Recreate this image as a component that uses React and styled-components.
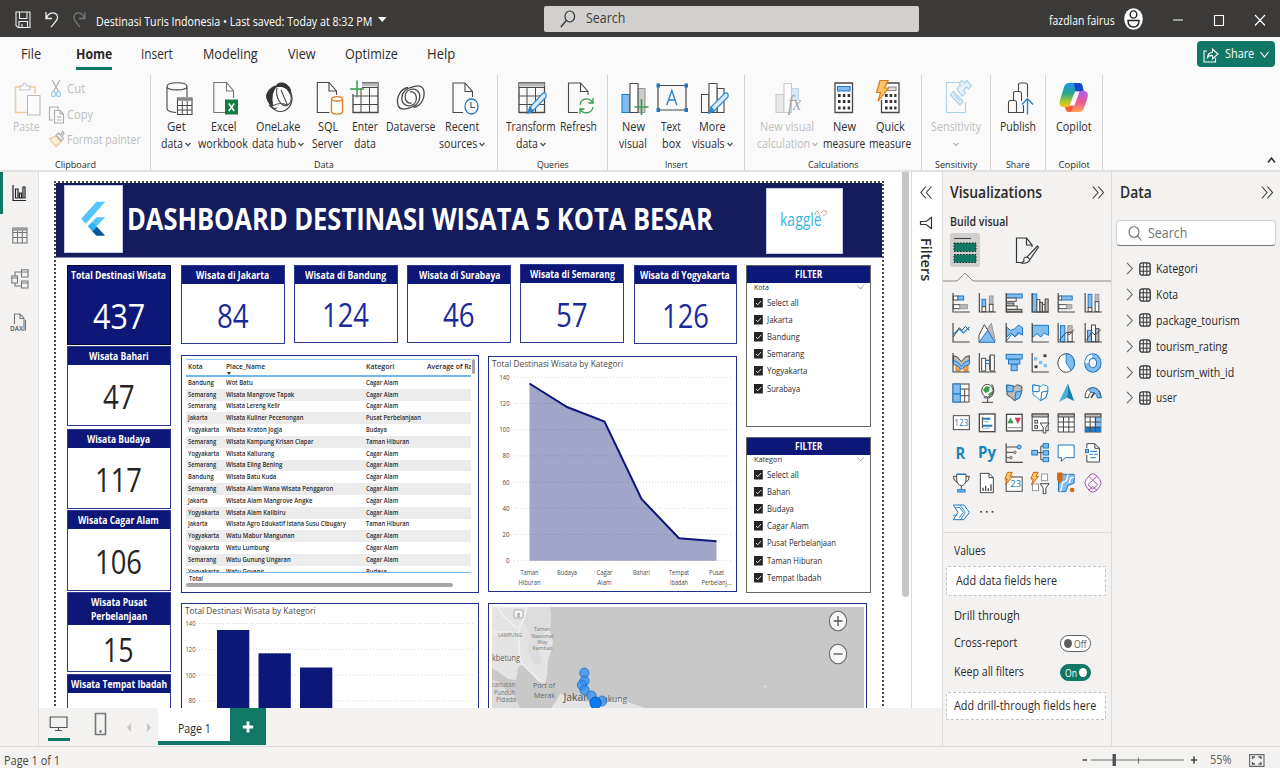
import React, { useLayoutEffect, useRef, useState } from "react";
import styled, { createGlobalStyle, css } from "styled-components";

const TEAL = "#117865";
const NAVY = "#0d1777";
const K = "#4a4846";
const B = "#1f78c4";
const LB = "#83bdf0";
const G = "#bdbbb9";
const O = "#e0812a";
const GR = "#3a9c50";

const Global = createGlobalStyle`
  * { box-sizing: border-box; }
  body { margin: 0; overflow: hidden; background: #f3f2f1; }
  svg { display: block; flex: none; overflow: visible; }
`;

/* ---------- text fitted to a condensed width ---------- */
const FitBox = styled.span`
  display: inline-block;
  flex: none;
  width: ${(p) => p.$w}px;
  white-space: nowrap;
  font-size: ${(p) => p.$size}px;
  font-weight: ${(p) => p.$weight};
  ${(p) => p.$color && css`color: ${p.$color};`}
`;
const FitInner = styled.span`
  display: inline-block;
  transform-origin: 0 50%;
`;
function Fit({ w, size = 12, weight = 400, color, children }) {
  const ref = useRef(null);
  const [k, setK] = useState(1);
  useLayoutEffect(() => {
    const natural = ref.current.offsetWidth;
    if (natural) setK(w / natural);
  }, [w, children]);
  return (
    <FitBox $w={w} $size={size} $weight={weight} $color={color}>
      <FitInner ref={ref} style={{ transform: `scaleX(${k})` }}>{children}</FitInner>
    </FitBox>
  );
}

const P = ({ d, s = K, f = "none", w = 1.1, ...r }) => (
  <path d={d} stroke={s} fill={f} strokeWidth={w} {...r} />
);

/* ---------- frame ---------- */
const Frame = styled.div`
  width: 1280px;
  height: 768px;
  display: flex;
  flex-direction: column;
  overflow: hidden;
  background: #f3f2f1;
  color: #2b2a29;
  font-family: "Open Sans", "Noto Sans", "Liberation Sans", sans-serif;
  line-height: 1.2;
`;

/* ---------- title bar ---------- */
const TitleBar = styled.header`
  height: 37px;
  flex: none;
  display: flex;
  align-items: center;
  background: #3b3a38;
  color: #fff;
  padding: 0 15px 0 15px;
`;
const TitleLeft = styled.div`
  width: 529px;
  display: flex;
  align-items: center;
  height: 100%;
`;
const TitleText = styled.div`
  display: flex;
  align-items: center;
  gap: 6px;
  margin-left: 9px;
  padding-top: 7px;
`;
const TitleSearch = styled.div`
  width: 375px;
  height: 26px;
  border-radius: 2px;
  background: #d2d0ce;
  display: flex;
  align-items: center;
  gap: 10px;
  padding-left: 16px;
  color: #3d3c3b;
`;
const TitleRight = styled.div`
  display: flex;
  align-items: center;
  margin-left: 130px;
  height: 100%;
`;
const UserName = styled.div`
  padding-top: 2px;
`;

/* ---------- ribbon ---------- */
const Ribbon = styled.section`
  height: 135px;
  flex: none;
  background: #fafafa;
  border-bottom: 2px solid #e3e2e1;
  display: flex;
  flex-direction: column;
`;
const TabsRow = styled.nav`
  height: 36px;
  display: flex;
  align-items: flex-start;
  padding-left: 21px;
`;
const Tab = styled.div`
  height: 33px;
  margin-right: ${(p) => p.$gap}px;
  line-height: 32px;
  border-bottom: 3px solid ${(p) => (p.$on ? TEAL : "transparent")};
`;
const ShareButton = styled.div`
  margin: 4px 5px 0 auto;
  width: 78px;
  height: 26px;
  border-radius: 4px;
  background: ${TEAL};
  color: #fff;
  display: flex;
  align-items: center;
  padding: 1px 0 0 6px;
  gap: 6px;
`;
const Groups = styled.div`
  height: 97px;
  display: flex;
  padding-top: 2px;
  align-items: flex-start;
`;
const Group = styled.div`
  width: ${(p) => p.$w}px;
  height: 95px;
  border-right: 1px solid #d5d3d1;
  display: flex;
  flex-direction: column;
`;
const GroupTools = styled.div`
  height: 81px;
  display: flex;
  justify-content: ${(p) => (p.$start === undefined ? "center" : "flex-start")};
  padding-left: ${(p) => p.$start || 0}px;
`;
const GroupName = styled.div`
  height: 13px;
  line-height: 13px;
  text-align: center;
`;
const Tool = styled.div`
  width: ${(p) => p.$w}px;
  flex: none;
  display: flex;
  flex-direction: column;
  align-items: center;
  color: ${(p) => (p.$off ? "#c0bebc" : "#2f2e2d")};
  padding-top: 3px;
`;
const ToolLine = styled.div`
  height: 17.4px;
  line-height: 17.4px;
  display: flex;
  align-items: center;
  justify-content: center;
  gap: 2px;
  white-space: nowrap;
`;
const ToolIcon = styled.div`
  height: 40px;
`;
const ClipList = styled.div`
  display: flex;
  flex-direction: column;
  color: #c0bebc;
  margin-left: 5px;
  padding-top: 1px;
`;
const ClipRow = styled.div`
  height: 25.8px;
  display: flex;
  align-items: center;
  gap: 2px;
`;
const Collapse = styled.div`
  margin: 81px 4px 0 auto;
`;

const Chev = ({ c = "#444", s = 6 }) => (
  <svg width={s} height={s} viewBox="0 0 6 6"><P d="M.6 2L3 4.600L5.400 2" s={c} w={1.2} /></svg>
);

const swirl = "M408 87.500C400 89 396 98 398 105C399.500 110 404 109.500 408 108.300C414 107 419.500 104 419.800 97C420 91 415 88 410.500 89.500C406 91 404.500 95 405.500 99C406.500 102 409 103.500 411.500 103";

const toolIcons = {
  paste: () => (
    <g opacity=".55">
      <P d="M21 87H16.5V112.500H28M31 87H36V94" s="#e8a658" w={1.5} />
      <P d="M21 90V86H23.500Q25.500 80 28 86H31V90Z" s="#999" f="#fff" />
      <P d="M28.500 95.500H41V115H28.500Z" s="#888" f="#fff" />
    </g>
  ),
  get: () => (
    <g>
      <P d="M176 112.500C171 112 167 110.500 167 108.500V86.500C167 81.500 187 81.500 187 86.500V97M167 86.500C167 91 187 91 187 86.500" f="none" />
      <P d="M177.500 98H192V114.500H177.500Z" f="#fff" />
      <P d="M177.500 99.500H192" w={2.6} s="#8a8886" />
      <P d="M177.500 105.500H192M177.500 110H192M182.300 101V114M187.200 101V114" w={1} />
    </g>
  ),
  excel: () => (
    <g>
      <P d="M225 112.500H213.800V82.500H226.500L233.500 91V98M226.500 82.500V91H233.500" s="#777" />
      <rect x="225" y="99.500" width="13" height="15" fill="#107c41" />
      <P d="M228.800 103.500L234.200 111M234.200 103.500L228.800 111" s="#fff" w={1.6} />
    </g>
  ),
  onelake: () => (
    <g>
      <ellipse cx="280.500" cy="98.500" rx="11.500" ry="13" fill="#fff" stroke="#444" strokeWidth="1.200" />
      <P d="M276 86C278 82 285 81.500 289 87C291 90 291 92 290 94C288 88 282 85 276 87Z" f="#333" s="#333" w={1} />
      <P d="M275 86C268 89 265 95 267.500 100C269 104 271 105.500 273 106C271 99 272 92 276 87Z" f="#333" s="#333" w={1} />
      <P d="M277 88C275 97 281 107 287 105.500C291 103.500 292 99 290.500 94M272.500 106C278 102.500 284 103 287.500 105.500M281 90L287.500 105M269 105C271 108 274 109 277 108" />
    </g>
  ),
  sql: () => (
    <g>
      <P d="M329 112.500H316.800V82.500H328.500L336 91V95M328.500 82.500V91H336" />
      <P d="M331 99.500V111.500C331 115 342 115 342 111.500V99.500" s={O} f="#fff" w={1.4} />
      <ellipse cx="336.500" cy="98.800" rx="5.500" ry="2.200" fill="#fff" stroke={O} strokeWidth="1.400" />
    </g>
  ),
  enter: () => (
    <g>
      <P d="M353 94V112.500H378V83H362" w={1.3} />
      <P d="M362 84.800H378" s="#bbb" w={3} />
      <P d="M353 96H378M353 104.500H378M361 88V112M369.500 88V112M362 87.500H378" w={1} />
      <P d="M350 89H364M357 80.500V97.500" s={GR} w={1.5} />
    </g>
  ),
  dataverse: () => (
    <g>
      <P d={swirl} w={1.3} />
      <P d={swirl} w={1.3} transform="rotate(180 410.800 97.500)" />
    </g>
  ),
  recent: () => (
    <g>
      <P d="M463 112.500H453V83H465L472.500 91.500V97M465 83V91.500H472.500" />
      <ellipse cx="471.500" cy="106.500" rx="6.500" ry="7.500" fill="#fff" stroke={B} strokeWidth="1.300" />
      <P d="M471 102V107.500H475" s="#555" />
    </g>
  ),
  transform: () => (
    <g>
      <P d="M519 83H544.500V112.500H519Z" w={1.3} />
      <P d="M519 85H544.500" s="#bbb" w={3} />
      <P d="M519 96H544.500M519 104.500H544.500M527 88V112M535.500 88V112M519 87.500H544" w={1} />
      <P d="M528 113L530 107L543 93Q547 92 546 97L533 111Z" s="#2c86cc" f="#d6eafb" w={1.2} />
      <P d="M528 113L530 107L533 111Z" s="#2c86cc" f="#2c86cc" />
    </g>
  ),
  refresh: () => (
    <g>
      <P d="M578 112.500H568.500V83H580.500L588 91.500V95M580.500 83V91.500H588" />
      <P d="M580 105C580.500 98.500 589 96.500 592.500 102.500M593 107C592 113.500 583.500 115 580.500 109.500M593 98V103H588.500M580 114V109H584.500" s={GR} w={1.3} />
    </g>
  ),
  newvisual: () => (
    <g>
      <P d="M622 94.500H630V112.500H622Z" s={B} f={LB} />
      <P d="M638 88.500H645V112.500H638Z" s="#999" f="#ccc" />
      <P d="M630 83.500H638V112.500H630Z" f="#fff" />
      <P d="M634.500 107H648.500M641.500 99V115" s={GR} w={1.6} />
    </g>
  ),
  textbox: () => (
    <g>
      <P d="M658 85.500H686V110H658Z" w={1.2} />
      <P d="M656.500 83.500h3.500v4h-3.500ZM684.500 83.500h3.500v4h-3.500ZM656.500 108h3.500v4h-3.500ZM684.500 108h3.500v4h-3.500Z" f={B} s={B} w={0} />
      <P d="M666.800 105L671.800 90.500L676.800 105M668.600 100H675" s="#2b86cf" w={1.4} />
    </g>
  ),
  more: () => (
    <g>
      <P d="M701.500 94.500H709V112.500H701.500Z" />
      <P d="M717 88.500H724V112.500H717Z" />
      <P d="M709 83.500H717V112.500H709Z" f="#fff" />
      <P d="M709 113L711 107L725 93Q729 92 728 97L714 111Z" s="#2c86cc" f="#d6eafb" w={1.2} />
      <P d="M709 113L711 107L714 111Z" s="#2c86cc" f="#2c86cc" />
    </g>
  ),
  newcalc: () => (
    <g opacity=".75">
      <P d="M776 94.500H784V112.500H776Z" s="#bbb" f="#e4e4e4" />
      <P d="M791.500 88.500H798.500V100H791.500Z" s="#a9cde8" f="#cfe4f5" />
      <P d="M784 83.500H791.500V112.500H784Z" s="#bbb" f="#fff" />
      <text x="788" y="110" fontFamily="Liberation Serif, serif" fontStyle="italic" fontSize="21" fill="#8a8a8a" textLength="13" lengthAdjust="spacingAndGlyphs">fx</text>
    </g>
  ),
  newmeasure: () => (
    <g>
      <P d="M835 83H852.500V112.500H835Z" w={1.3} f="#fff" />
      <P d="M837.500 86.500H850V91H837.500Z" s={B} f={LB} />
      <P d="M838 95.500H850.500M838 101.500H850.500M838 108H850.500" w={3} strokeDasharray="2.600 2.200" s="#333" />
    </g>
  ),
  quick: () => (
    <g>
      <P d="M883 83H899V112.500H881.500V100" w={1.3} f="#fff" />
      <P d="M888 87H896V90.500H887" s="#888" f="#ddd" />
      <P d="M885 95.500H896.500M885 101.500H896.500M885 108H896.500" w={3} strokeDasharray="2.600 2.000" s="#333" />
      <P d="M880 80.500H888L884.500 88H888.500L878 101.500L880.500 92.500H876.500Z" s="#d97a1c" f="#fbc46a" w={1.2} />
    </g>
  ),
  sensitivity: () => (
    <g opacity=".6">
      <P d="M961 82.500H946.500V112.500H965.500V102" s="#7db9e2" />
      <P d="M950.500 95L953.500 91.500L963 101.500L960 105ZM954 95L960 101" s="#7db9e2" f="#d8ebf8" w={1.2} />
      <P d="M957 89L960.500 85L959 83L962 80.500L964.500 83L967 80.500L971.500 86L968.500 89L966.500 87L963.500 90.500L965.500 93L962 96Z" s="#7db9e2" f="#d8ebf8" w={1.2} />
    </g>
  ),
  publish: () => (
    <g>
      <P d="M1018.500 91V85Q1018.500 83 1020.500 83H1025Q1027.500 83 1027.500 85V97" />
      <P d="M1013.500 100V93.500Q1013.500 91.500 1015.500 91.500H1019Q1021.500 91.500 1021.500 93.500V101" />
      <P d="M1008.500 112.500V102.500Q1008.500 100.500 1010.500 100.500H1014.500Q1016.500 100.500 1016.500 102.500V112.500ZM1016.500 112.500H1023.500V105" />
      <P d="M1027.500 114.500V98.500M1022 104.500L1027.500 98.500L1033 104.500" s="#2b86cf" w={1.4} />
    </g>
  ),
  copilot: () => (
    <g>
      <defs>
        <linearGradient id="cpA" x1="0" y1="0" x2="0" y2="1"><stop offset="0" stopColor="#1f8ff0" /><stop offset=".45" stopColor="#2aa88c" /><stop offset=".75" stopColor="#a9c52e" /><stop offset="1" stopColor="#fdc311" /></linearGradient>
        <linearGradient id="cpB" x1="0" y1="0" x2="0" y2="1"><stop offset="0" stopColor="#b05cf0" /><stop offset=".55" stopColor="#ee5a8e" /><stop offset="1" stopColor="#ffa351" /></linearGradient>
      </defs>
      <path d="M1073 83H1079C1081 83 1082 84 1082.500 86L1083.500 91H1078Q1075.500 91 1074.500 94L1071 104Q1070 107 1067 107H1063C1060 107 1059 104 1060 100L1064 87Q1065.500 83 1069 83Z" fill="url(#cpA)" />
      <path d="M1074 83H1079C1081 83 1082 84 1082.500 86L1083.500 91H1078Q1076.500 91 1075.500 92Z" fill="#1647c8" />
      <path d="M1077 91H1084C1087.500 91 1088.500 94 1087.500 98L1084 108Q1082.500 112 1079 112H1069C1067 112 1066 111 1065.500 109L1065 107H1067Q1070 107 1071 104L1074.500 94Q1075.500 91 1077 91Z" fill="url(#cpB)" />
      <path d="M1065 107H1067Q1070 107 1071 104L1073 108L1071 112H1069Q1066 112 1065 107Z" fill="#f0552c" opacity=".8" />
      <path d="M1075 91.500L1079.500 91.500L1074.500 105.500H1069.500Z" fill="#fff" opacity=".95" />
    </g>
  ),
};

const ribbonGroups = [
  { w: 347, start: 4, name: "Data", nw: 20, tools: [
    { i: "get", cx: 176, w: 42, a: ["Get", 19], b: ["data", 22], c: 1 },
    { i: "excel", cx: 223, w: 52, a: ["Excel", 25], b: ["workbook", 50] },
    { i: "onelake", cx: 278, w: 58, a: ["OneLake", 44], b: ["data hub", 44], c: 1 },
    { i: "sql", cx: 327.5, w: 41, a: ["SQL", 20], b: ["Server", 31] },
    { i: "enter", cx: 365, w: 34, a: ["Enter", 26], b: ["data", 22] },
    { i: "dataverse", cx: 410, w: 56, a: ["Dataverse", 49] },
    { i: "recent", cx: 462, w: 48, a: ["Recent", 34], b: ["sources", 38], c: 1 },
  ] },
  { w: 110, start: 8, name: "Queries", nw: 32, tools: [
    { i: "transform", cx: 531, w: 50, a: ["Transform", 50], b: ["data", 22], c: 1 },
    { i: "refresh", cx: 578, w: 44, a: ["Refresh", 37] },
  ] },
  { w: 137, start: 7, name: "Insert", nw: 23, tools: [
    { i: "newvisual", cx: 633, w: 36, a: ["New", 23], b: ["visual", 28] },
    { i: "textbox", cx: 671, w: 40, a: ["Text", 20], b: ["box", 19] },
    { i: "more", cx: 712, w: 42, a: ["More", 27], b: ["visuals", 33], c: 1 },
  ] },
  { w: 177, start: 8, name: "Calculations", nw: 51, tools: [
    { i: "newcalc", cx: 787, w: 68, a: ["New visual", 54], b: ["calculation", 53], c: 1, off: 1 },
    { i: "newmeasure", cx: 844, w: 46, a: ["New", 23], b: ["measure", 42] },
    { i: "quick", cx: 890, w: 46, a: ["Quick", 29], b: ["measure", 42] },
  ] },
  { w: 69, name: "Sensitivity", nw: 42, tools: [{ i: "sensitivity", cx: 956, w: 52, a: ["Sensitivity", 50], c: 1, off: 1 }] },
  { w: 55, name: "Share", nw: 24, tools: [{ i: "publish", cx: 1018, w: 38, a: ["Publish", 36] }] },
  { w: 57, name: "Copilot", nw: 31, tools: [{ i: "copilot", cx: 1074, w: 38, a: ["Copilot", 36] }] },
];

function RibbonTool({ i, cx, w, a, b, c, off }) {
  const Icon = toolIcons[i];
  return (
    <Tool $w={w} $off={off}>
      <ToolIcon><svg width="40" height="40" viewBox={`${cx - 20} 78 40 40`}><Icon /></svg></ToolIcon>
      <ToolLine><Fit w={a[1]} size={12}>{a[0]}</Fit></ToolLine>
      {(b || c) && (
        <ToolLine>
          {b && <Fit w={b[1]} size={12}>{b[0]}</Fit>}
          {c && <Chev c={off ? "#b5b3b1" : "#444"} />}
        </ToolLine>
      )}
    </Tool>
  );
}

/* ---------- body ---------- */
const Body = styled.main`
  height: 574px;
  flex: none;
  display: flex;
`;
const Rail = styled.aside`
  width: 39px;
  flex: none;
  border-right: 1px solid #e1dfdd;
  background: #f3f2f1;
`;
const RailItem = styled.div`
  height: ${(p) => p.$h}px;
  border-left: 3px solid ${(p) => (p.$on ? TEAL : "transparent")};
  display: flex;
  align-items: center;
  padding-left: ${(p) => p.$pl || 9}px;
`;
const Work = styled.div`
  width: 903px;
  flex: none;
  display: flex;
  flex-direction: column;
`;
const WorkTop = styled.div`
  height: 536px;
  display: flex;
  overflow: hidden;
  background: #fff;
`;
const Canvas = styled.div`
  width: 863px;
  height: 536px;
  overflow: hidden;
  padding: 9px 0 0 15px;
`;
const Scroll = styled.div`
  width: 10px;
  flex: none;
  border-right: 1px solid #dcdad8;
`;
const Thumb = styled.div`
  width: 7px;
  height: 425px;
  border-radius: 0 0 4px 4px;
  background: #c8c6c4;
`;
const FiltersPane = styled.div`
  width: 30px;
  display: flex;
  flex-direction: column;
  align-items: center;
  padding: 14px 2px 0 0;
  gap: 17px;
`;
const VerticalLabel = styled.div`
  writing-mode: vertical-rl;
  font-size: 14.5px;
  font-weight: 600;
  line-height: 16px;
  margin-top: -9px;
  margin-right: 1px;
`;

/* ---------- report page ---------- */
const Page = styled.div`
  width: 830px;
  height: 620px;
  border: 2px dotted #4a4a4a;
`;
const Banner = styled.div`
  height: 75px;
  display: flex;
  background: #141c5e;
  border-bottom: 1px solid #8a8fb0;
  color: #fff;
`;
const Logo = styled.div`
  width: ${(p) => p.$w}px;
  height: ${(p) => p.$h}px;
  margin: ${(p) => p.$m};
  flex: none;
  background: #fff;
  border: 1px solid #c9cce6;
  display: flex;
  align-items: center;
  justify-content: center;
`;
const BannerTitle = styled.h1`
  margin: 0 0 0 4px;
  height: 72px;
  line-height: 72px;
  font-size: 30px;
`;
const KaggleMark = styled.div`
  display: flex;
  align-items: center;
  position: relative;
  line-height: 20px;
  margin: -4px 8px 0 0;
`;
const Spark = styled.div`
  position: absolute;
  left: 34px;
  top: 0;
`;
const Report = styled.div`
  display: flex;
  padding: 7px 0 0 11px;
`;
const LeftCol = styled.div`
  width: 104px;
  flex: none;
`;
const MainCol = styled.div`
  margin-left: 10px;
`;
const Upper = styled.div`
  display: flex;
  height: 338px;
`;
const Middle = styled.div`
  width: 556px;
`;
const CardsRow = styled.div`
  display: flex;
  justify-content: space-between;
  height: 80px;
`;
const PanelsRow = styled.div`
  display: flex;
  gap: 9px;
  margin-top: 10px;
`;
const LowerRow = styled.div`
  display: flex;
  gap: 9px;
`;
const FilterCol = styled.div`
  margin-left: 9px;
  display: flex;
  flex-direction: column;
  gap: 10px;
`;
const CardBox = styled.div`
  width: 103.5px;
  height: ${(p) => p.$h || 80}px;
  margin-top: ${(p) => p.$mt || 0}px;
  border: 1px solid ${(p) => (p.$solid ? "#05082e" : "#2c3892")};
  background: ${(p) => (p.$solid ? NAVY : "#fff")};
  color: ${(p) => p.$c};
  display: flex;
  flex-direction: column;
`;
const CardHead = styled.div`
  background: ${NAVY};
  color: #fff;
  height: ${(p) => p.$h}px;
  display: flex;
  flex-direction: column;
  align-items: center;
  justify-content: center;
  line-height: 14px;
  flex: none;
`;
const CardValue = styled.div`
  flex: 1;
  display: flex;
  align-items: center;
  justify-content: center;
  line-height: 36px;
  padding-top: 4px;
`;
function Card({ title, value, vw, size = 32, c = "#252423", solid, h, mt }) {
  return (
    <CardBox $solid={solid} $h={h} $mt={mt} $c={c}>
      <CardHead $h={title.length > 1 ? 32 : 18}>
        {title.map(([t, w]) => <Fit key={t} w={w} size={10} weight={700}>{t}</Fit>)}
      </CardHead>
      {value && <CardValue><Fit w={vw} size={size}>{value}</Fit></CardValue>}
    </CardBox>
  );
}

const Panel = styled.div`
  width: ${(p) => p.$w}px;
  height: ${(p) => p.$h}px;
  margin-top: ${(p) => p.$mt || 0}px;
  border: 1px solid #232f8c;
  background: #fff;
  padding: ${(p) => p.$pad || "0"};
  overflow: hidden;
  flex: none;
`;
const TableFrame = styled.div`
  display: flex;
  height: 224px;
  gap: 1px;
`;
const TableArea = styled.div`
  width: 285px;
  overflow: hidden;
`;
const TableGrid = styled.div`
  display: grid;
  grid-template-columns: 37.5px 140.500px 61px 60px;
  height: ${(p) => p.$h}px;
  align-items: center;
  padding-left: 2px;
  width: 299px;
  line-height: 10px;
  background: ${(p) => (p.$alt ? "#ececec" : "transparent")};
`;
const TableHead = styled.div`
  height: 18px;
  border-top: 1px solid #8ec7f5;
  border-bottom: 2px solid #74b6ee;
`;
const TableRows = styled.div`
  height: 195px;
  overflow: hidden;
`;
const TableTotal = styled.div`
  height: 13px;
  border-top: 1px solid #74b6ee;
  border-bottom: 1px solid #8ec7f5;
  padding-left: 3px;
  display: flex;
  align-items: center;
`;
const HBar = styled.div`
  width: 267px;
  height: 4px;
  border-radius: 2px;
  background: #a6a6a6;
`;
const VBar = styled.div`
  width: 3px;
  height: 15px;
  border-radius: 2px;
  background: #a6a6a6;
`;
const HeadCell = styled.div`
  position: relative;
  display: flex;
`;
const SortMark = styled.div`
  position: absolute;
  left: 1px;
  top: 10px;
  border: 2px solid transparent;
  border-top: 3px solid #333;
`;

const CA = ["Cagar Alam", 32.5], TH = ["Taman Hiburan", 43], PP = ["Pusat Perbelanjaan", 55], BU = ["Budaya", 21];
const BD = ["Bandung", 25.5], SM = ["Semarang", 28.5], JK = ["Jakarta", 20], YK = ["Yogyakarta", 31];
const rows = [
  [BD, ["Wot Batu", 26.5], CA],
  [SM, ["Wisata Mangrove Tapak", 68.5], CA],
  [SM, ["Wisata Lereng Kelir", 54.5], CA],
  [JK, ["Wisata Kuliner Pecenongan", 77.5], PP],
  [YK, ["Wisata Kraton Jogja", 56], BU],
  [SM, ["Wisata Kampung Krisan Clapar", 87], TH],
  [YK, ["Wisata Kaliurang", 48], CA],
  [SM, ["Wisata Eling Bening", 56], CA],
  [BD, ["Wisata Batu Kuda", 50.5], CA],
  [SM, ["Wisata Alam Wana Wisata Penggaron", 107], CA],
  [JK, ["Wisata Alam Mangrove Angke", 86], CA],
  [YK, ["Wisata Alam Kalibiru", 59.5], CA],
  [JK, ["Wisata Agro Edukatif Istana Susu Cibugary", 119.5], TH],
  [YK, ["Watu Mabur Mangunan", 68.5], CA],
  [YK, ["Watu Lumbung", 43.5], CA],
  [SM, ["Watu Gunung Ungaran", 65], CA],
  [YK, ["Watu Goyang", 38], BU],
];

function DataTable() {
  return (
    <Panel $w={298} $h={238} $pad="3px 0 0 4px">
      <TableFrame>
        <TableArea>
          <TableHead>
            <TableGrid $h={14}>
              <Fit w={15} size={7} weight={600}>Kota</Fit>
              <HeadCell><Fit w={39} size={7} weight={600}>Place_Name</Fit><SortMark /></HeadCell>
              <Fit w={28} size={7} weight={600}>Kategori</Fit>
              <Fit w={58} size={7} weight={600}>Average of Rating</Fit>
            </TableGrid>
          </TableHead>
          <TableRows>
            {rows.map((r, n) => (
              <TableGrid key={n} $h={11.8} $alt={n % 2 === 1}>
                {r.map(([t, w]) => <Fit key={t} w={w} size={6.3} weight={600}>{t}</Fit>)}
              </TableGrid>
            ))}
          </TableRows>
          <TableTotal><Fit w={14} size={6.500} weight={600}>Total</Fit></TableTotal>
        </TableArea>
        <VBar />
      </TableFrame>
      <HBar />
    </Panel>
  );
}

const ChartText = ({ x, y, w, size = 6.500, anchor = "middle", children, c = "#4a4846" }) => (
  <text x={x} y={y} fontSize={size} fill={c} textAnchor={anchor} textLength={w} lengthAdjust="spacingAndGlyphs">{children}</text>
);

function AreaChart() {
  const ticks = [140, 120, 100, 80, 60, 40, 20, 0];
  const pts = [[529.5, 383.5], [567, 407], [604.5, 421.5], [641.5, 499], [679, 538.3], [716.5, 541.2]];
  const line = pts.map((p) => p.join(" ")).join("L");
  const cats = [["Taman", 18, "Hiburan", 22], ["Budaya", 20], ["Cagar", 16, "Alam", 14], ["Bahari", 17], ["Tempat", 20, "Ibadah", 18], ["Pusat", 15, "Perbelanj...", 30]];
  return (
    <Panel $w={249} $h={236} $mt={1}>
      <svg width="248" height="234" viewBox="489 357 248 234">
        <ChartText x={492} y={367} w={131} size={9} anchor="start">Total Destinasi Wisata by Kategori</ChartText>
        {ticks.map((t, n) => {
          const y = 377.300 + n * 26.2;
          return (
            <g key={t}>
              <line x1="514" x2="732" y1={y} y2={y} stroke="#d6d6d6" strokeDasharray="1 2" />
              <ChartText x={509.500} y={y + 2.400} w={t > 99 ? 10 : t ? 7 : 3.500} anchor="end">{t}</ChartText>
            </g>
          );
        })}
        <path d={`M529.5 560.700L${line}L716.5 560.700Z`} fill={NAVY} opacity=".39" />
        <path d={`M${line}`} fill="none" stroke={NAVY} strokeWidth="2" />
        {cats.map((c, n) => (
          <g key={n}>
            <ChartText x={pts[n][0]} y={575} w={c[1]}>{c[0]}</ChartText>
            {c[2] && <ChartText x={pts[n][0]} y={584.500} w={c[3]}>{c[2]}</ChartText>}
          </g>
        ))}
      </svg>
    </Panel>
  );
}

function BarChart() {
  const bars = [[217, 630], [258.5, 653.3], [300, 667.5]];
  return (
    <Panel $w={298} $h={180}>
      <svg width="296" height="178" viewBox="182 604 296 178">
        <ChartText x={185} y={613.500} w={130.500} size={9} anchor="start">Total Destinasi Wisata by Kategori</ChartText>
        {[140, 120, 100, 80].map((t, n) => {
          const y = 623.500 + n * 25.8;
          return (
            <g key={t}>
              <line x1="199" x2="474" y1={y} y2={y} stroke="#d6d6d6" strokeDasharray="1 2" />
              <ChartText x={195.500} y={y + 2.400} w={t > 99 ? 10 : 7} anchor="end">{t}</ChartText>
            </g>
          );
        })}
        {bars.map(([x, y]) => <rect key={x} x={x} y={y} width="32.300" height={780 - y} fill={NAVY} />)}
      </svg>
    </Panel>
  );
}

function MapPanel() {
  const dots = [[584.3, 673], [584.5, 681], [582, 685], [584.5, 690], [591.5, 696], [602, 701]];
  return (
    <Panel $w={379} $h={180} $pad="3px">
      <svg width="372" height="172" viewBox="492 607 372 172">
        <rect x="492" y="607" width="372" height="172" fill="#c8c8c8" />
        <path d="M492 607H548L551 614L550 630L553 642L551 652L548 660L547 675L545 684L538 681L530 672L522 664L518 668L516 680L508 679L500 673L492 668Z" fill="#e4e4e4" />
        <path d="M492 607H550L551 618L540 640L538 648L542 664L534 664L527 652L530 635L524 622L528 607Z" fill="#dcdcdc" />
        <path d="M492 607H527L524 618L519 628V652L522 664L540 681M492 632H512M498 607L503 616L517 628" fill="none" stroke="#f4f4f4" strokeWidth="1.200" />
        <path d="M492 680L500 682L506 690L513 693L520 708H492Z" fill="#dcdcdc" />
        <path d="M551 708L557 700L560 693L566 697L574 699L588 702L596 706L606 703L616 699L622 698L630 703L645 708V779H540Z" fill="#e4e4e4" />
        <rect x="514" y="610" width="9" height="8" rx="1" fill="#f5f5f5" stroke="#999" strokeWidth=".8" />
        <ChartText x={518.500} y={616.500} w={3} size={5.500}>8</ChartText>
        <ChartText x={510} y={636.500} w={24} size={5.500} c="#777">LAMPUNG</ChartText>
        <ChartText x={542} y={631} w={16} size={5.500} c="#777">Taman</ChartText>
        <ChartText x={542.500} y={637.500} w={22} size={5.500} c="#777">Nasional</ChartText>
        <ChartText x={542.500} y={643.500} w={10} size={5.500} c="#777">Way</ChartText>
        <ChartText x={542.500} y={649.500} w={20} size={5.500} c="#777">Kambas</ChartText>
        <ChartText x={492} y={661} w={28} size={8.500} anchor="start" c="#666">kbetung</ChartText>
        <ChartText x={492} y={687} w={23} size={7} anchor="start" c="#777">camatan</ChartText>
        <ChartText x={504.500} y={695} w={21} size={7} c="#777">Punduh</ChartText>
        <ChartText x={506} y={702} w={20} size={7} c="#777">Pidada</ChartText>
        <ChartText x={544} y={688} w={22} size={8} c="#666">Port of</ChartText>
        <ChartText x={544.500} y={698} w={21} size={8} c="#666">Merak</ChartText>
        <ChartText x={563.500} y={701} w={24} size={10.500} anchor="start" c="#555">Jakar</ChartText>
        <ChartText x={603} y={701.500} w={24} size={9.500} anchor="start" c="#666">akung</ChartText>
        <circle cx="765" cy="686.500" r="1" fill="#ededed" />
        {dots.map(([x, y], n) => <ellipse key={n} cx={x} cy={y} rx="4.600" ry="5" fill="#2f8ff0" fillOpacity=".75" stroke="#1b6fd0" strokeWidth=".8" />)}
        <ellipse cx="595.500" cy="703" rx="5.500" ry="6" fill="#0a7bf2" stroke="#0a55c0" />
        {[621, 654].map((y, n) => (
          <g key={y}>
            <ellipse cx="838" cy={y} rx="8.600" ry="9.800" fill="#f7f7f7" stroke="#666" strokeWidth="1.100" />
            <path d={n ? `M833.5 ${y}H842.5` : `M833.5 ${y}H842.5M838 ${y - 5}V${y + 5}`} stroke="#555" strokeWidth="1.300" />
          </g>
        ))}
      </svg>
    </Panel>
  );
}

const FilterBox = styled.div`
  width: 125px;
  height: ${(p) => p.$h}px;
  border: 1px solid #666;
  background: #fff;
`;
const FilterHead = styled.div`
  height: 17px;
  background: ${NAVY};
  color: #fff;
  display: flex;
  align-items: center;
  justify-content: center;
  line-height: 14px;
  padding-bottom: 2px;
`;
const FilterField = styled.div`
  height: 11px;
  padding: 0 6px 3px 7px;
  display: flex;
  align-items: center;
  justify-content: space-between;
  line-height: 10px;
`;
const FilterItem = styled.div`
  height: 17.2px;
  padding-left: 7px;
  display: flex;
  align-items: center;
  gap: 4px;
  line-height: 14px;
`;
function FilterPanel({ h, field, fw, items }) {
  return (
    <FilterBox $h={h}>
      <FilterHead><Fit w={27} size={10} weight={700}>FILTER</Fit></FilterHead>
      <FilterField>
        <Fit w={fw} size={7.500}>{field}</Fit>
        <svg width="7" height="5" viewBox="0 0 7 5"><P d="M.5 .5L3.500 4L6.500 .5" s="#999" w={.9} /></svg>
      </FilterField>
      {items.map(([t, w]) => (
        <FilterItem key={t}>
          <svg width="9" height="10" viewBox="0 0 9 10"><rect width="8.800" height="9.500" fill="#252423" /><P d="M2 5L3.800 6.800L7 3" s="#ddd" w={1} /></svg>
          <Fit w={w} size={9}>{t}</Fit>
        </FilterItem>
      ))}
    </FilterBox>
  );
}

/* ---------- bottom page tabs ---------- */
const PageTabs = styled.div`
  height: 38px;
  display: flex;
  align-items: flex-start;
`;
const ViewButton = styled.div`
  width: 22px;
  height: 33px;
  margin-left: 9px;
  border-bottom: 3px solid ${TEAL};
  display: flex;
  justify-content: center;
  padding-top: 8px;
`;
const PageTab = styled.div`
  width: 72px;
  height: 37px;
  border-bottom: 4px solid ${TEAL};
  background: #fff;
  display: flex;
  align-items: center;
  justify-content: center;
  padding-top: 7px;
`;
const AddTab = styled.div`
  width: 36px;
  height: 37px;
  background: ${TEAL};
  display: flex;
  align-items: center;
  justify-content: center;
`;
const TabsLead = styled.div`
  width: 119px;
  display: flex;
`;

/* ---------- right panes ---------- */
const Pane = styled.aside`
  width: ${(p) => p.$w}px;
  flex: none;
  background: #f3f2f1;
  border-left: 1px solid #dddbd9;
`;
const PaneHead = styled.div`
  height: 41px;
  display: flex;
  align-items: center;
  justify-content: space-between;
  padding: 0 7px 0 ${(p) => p.$pl || 7}px;
`;
const BuildLabel = styled.div`
  height: 20px;
  line-height: 15px;
  padding-left: 7px;
`;
const BuildModes = styled.div`
  display: flex;
  height: 39px;
  padding-left: 7px;
`;
const ModeButton = styled.div`
  width: 30px;
  height: 34px;
  border-radius: 3px;
  background: ${(p) => (p.$on ? "#d2d0ce" : "transparent")};
  display: flex;
  align-items: center;
  justify-content: center;
  margin-right: 32px;
`;
const VisualGrid = styled.div`
  display: grid;
  grid-template-columns: repeat(6, 26.3px);
  grid-auto-rows: 30px;
  padding: 6px 0 0 5px;
  height: 251px;
  align-items: center;
  justify-items: center;
  border-bottom: 1px solid #dddbd9;
`;
const Field = styled.div`
  height: ${(p) => p.$h}px;
  padding: ${(p) => p.$pt || 0}px 20px 0 11px;
  display: flex;
  align-items: center;
  justify-content: space-between;
`;
const Drop = styled.div`
  width: 160px;
  height: ${(p) => p.$h}px;
  margin-left: 3px;
  padding-left: ${(p) => p.$pl}px;
  background: #fff;
  border: 1px dashed #c4c2c0;
  border-radius: 2px;
  display: flex;
  align-items: center;
`;
const Gap = styled.div`
  height: 3px;
`;
const Toggle = styled.div`
  width: 31px;
  height: 17px;
  border-radius: 9px;
  border: 1px solid ${(p) => (p.$on ? TEAL : "#605e5c")};
  background: ${(p) => (p.$on ? TEAL : "#fff")};
  color: ${(p) => (p.$on ? "#fff" : "#605e5c")};
  display: flex;
  flex-direction: ${(p) => (p.$on ? "row-reverse" : "row")};
  align-items: center;
  justify-content: center;
  gap: 2px;
`;
const Knob = styled.span`
  width: 8px;
  height: 9px;
  border-radius: 50%;
  background: currentColor;
`;
const SearchBox = styled.div`
  width: 160px;
  height: 26px;
  margin: 7px 0 10px 4px;
  border: 1px solid #d1d1d1;
  border-bottom-color: #777;
  border-radius: 4px;
  background: #fff;
  display: flex;
  align-items: center;
  gap: 6px;
  padding-left: 11px;
`;
const TreeItem = styled.div`
  height: 25.8px;
  display: flex;
  align-items: center;
  padding-left: 14px;
`;
const TreeGap = styled.span`
  width: ${(p) => p.$w}px;
`;

/* each glyph is drawn on a 525x720 sheet; its cell is cut out by the viewBox */
const Q = ({ b, f = "#fff", s = K, w = 3 }) => <rect x={b[0]} y={b[1]} width={b[2]} height={b[3]} fill={f} stroke={s} strokeWidth={w} />;
const L = ({ d, s = K, f = "none", w = 3 }) => <path d={d} stroke={s} fill={f} strokeWidth={w} />;
const axis = (x, y) => <L d={`M${x} ${y}V${y + 57}H${x + 50}`} w={3.500} />;
const usa = (x, fa, fb, fc, s) => (
  <g>
    <L d={`M${x + 2} 314L${x + 20} 316L${x + 27} 319L${x + 33} 313L${x + 48} 318V332L${x + 44} 344L${x + 40} 353L${x + 26} 361L${x + 14} 350L${x + 4} 344Z`} f={fa} s={s} />
    <L d={`M${x + 3} 314L${x + 22} 316V334H${x + 3}Z`} f={fb} s={B} />
    <L d={`M${x + 30} 335L${x + 48} 332L${x + 42} 352L${x + 27} 360Z`} f={fc} s={B} />
  </g>
);
const bolt = (x, y) => <path d={`M${x + 9} ${y}H${x + 23}L${x + 17} ${y + 12}H${x + 24}L${x + 3} ${y + 38}L${x + 8} ${y + 20}H${x + 1}Z`} fill="#fbc46a" stroke="#d0690f" strokeWidth="3" />;
const visuals = [
  () => <g><Q b={[40, 47, 14, 12]} /><Q b={[54, 47, 17, 12]} f={LB} s={B} /><Q b={[40, 73, 20, 12]} /><Q b={[60, 73, 22, 12]} f={G} s="#999" />{axis(39, 38)}</g>,
  () => <g><Q b={[127, 57, 11, 22]} f={LB} s={B} /><Q b={[127, 79, 11, 15]} /><Q b={[149, 47, 11, 25]} f={G} s="#999" /><Q b={[149, 72, 11, 22]} />{axis(119, 38)}</g>,
  () => <g><Q b={[198, 41, 47, 12]} f={LB} s={B} /><Q b={[198, 53, 29, 10]} /><Q b={[198, 68, 22, 9]} f={G} /><Q b={[198, 77, 32, 10]} /><Q b={[198, 87, 46, 8]} f={G} />{axis(197, 38)}</g>,
  () => <g><Q b={[276, 41, 14, 54]} f={LB} s={B} /><Q b={[290, 58, 9, 37]} /><Q b={[299, 66, 8, 29]} f={G} /><Q b={[307, 72, 8, 23]} /><Q b={[315, 56, 9, 39]} f={G} />{axis(276, 38)}</g>,
  () => <g><Q b={[357, 47, 8, 12]} /><Q b={[365, 47, 32, 12]} f={LB} s={B} /><Q b={[357, 73, 24, 12]} /><Q b={[381, 73, 15, 12]} f={G} s="#999" />{axis(355, 38)}</g>,
  () => <g><Q b={[443, 42, 11, 40]} f={LB} s={B} /><Q b={[443, 82, 11, 12]} /><Q b={[464, 42, 11, 22]} f={G} s="#999" /><Q b={[464, 64, 11, 30]} />{axis(434, 38)}</g>,
  () => <g><L d="M40 162L58 146L70 158L88 140" s="#2b95d6" w={4} /><L d="M40 170L58 142L66 150L76 138L88 150" />{axis(39, 128)}</g>,
  () => <g><L d="M140 150L155 129L167 182H140Z" f={G} s="#999" /><L d="M118 184V165L134 133L150 160L142 184Z" f="#fff" /><L d="M118 186L144 150L166 186Z" f={LB} s={B} /></g>,
  () => <g><L d="M198 140L210 150L222 146L234 134L246 142V164L234 156L222 168L210 158L198 172Z" f={LB} s={B} /><L d="M198 182L214 160L224 170L236 158L246 164" s={B} />{axis(197, 128)}</g>,
  () => <g><L d="M277 135H325V165L312 158L302 170L290 160L277 172Z" f={LB} s={B} />{axis(276, 128)}</g>,
  () => <g><Q b={[362, 136, 13, 48]} f={LB} s={B} /><Q b={[384, 136, 13, 20]} f={G} s="#999" /><Q b={[384, 156, 13, 28]} /><L d="M358 180L380 155L388 164L402 148" />{axis(355, 128)}</g>,
  () => <g><Q b={[441, 150, 12, 34]} f={LB} s={B} /><Q b={[453, 134, 12, 50]} /><Q b={[465, 145, 10, 39]} f={G} /><L d="M437 180L454 156L464 164L481 148" />{axis(434, 128)}</g>,
  () => <g><Q b={[48, 248, 12, 24]} f="#f2a24a" s={O} /><Q b={[72, 252, 12, 20]} f="#f2a24a" s={O} /><L d="M40 226L52 230L64 244L76 230L88 226V246L76 250L64 264L52 252L40 246Z" f={G} /><L d="M40 240Q54 242 64 258Q74 242 88 240V252Q76 254 64 268Q54 254 40 252Z" f={LB} s={B} />{axis(39, 218)}</g>,
  () => <g><Q b={[126, 234, 12, 38]} /><L d="M138 240H150M150 226V270" s={B} w={4} /><Q b={[152, 224, 12, 48]} />{axis(119, 218)}<L d="M138 250H150" s={B} /></g>,
  () => <g><Q b={[197, 222, 48, 14]} f={LB} s={B} /><Q b={[204, 238, 34, 13]} f={LB} s={B} /><Q b={[212, 253, 18, 18]} f={LB} s={B} /></g>,
  () => <g><Q b={[311, 223, 7, 7]} f="#333" w={1} /><Q b={[283, 232, 7, 7]} f={LB} s={LB} /><Q b={[298, 243, 7, 7]} f={LB} s={LB} /><Q b={[312, 252, 7, 7]} f={LB} s={LB} /><Q b={[284, 256, 7, 7]} f="#333" w={1} />{axis(276, 218)}</g>,
  () => <g><ellipse cx="379" cy="248" rx="25" ry="28" fill="#fff" stroke={K} strokeWidth="3" /><L d="M379 220A25 28 0 0 1 394 270L379 248Z" f={LB} s={B} /></g>,
  () => <g><ellipse cx="457" cy="248" rx="18" ry="21" fill="none" stroke={B} strokeWidth="16" /><ellipse cx="457" cy="248" rx="18" ry="21" fill="none" stroke={LB} strokeWidth="10" /><L d="M439 248A18 21 0 0 1 455 227" s="#fff" w={10} /></g>,
  () => <g><Q b={[39, 311, 48, 54]} /><Q b={[39, 311, 22, 30]} f={LB} s={B} /><Q b={[39, 341, 22, 24]} f={LB} s={B} /><L d="M61 326H87M74 326V346M61 346H87M74 346V365" /></g>,
  () => <g><ellipse cx="143" cy="331" rx="17" ry="19" fill="#fff" stroke={K} strokeWidth="3" /><L d="M130 328L140 318L150 320L148 332L138 338ZM146 342L156 334L158 342L150 348Z" f={GR} s={GR} w={1} /><L d="M156 312Q168 328 158 346Q148 358 132 352M144 354V365M127 366H160" /></g>,
  () => usa(196, G, LB, LB, K),
  () => usa(275, "#fff", "#fff", "#fff", "#2b95d6"),
  () => <g><path d="M384 309L358 364L382 352Z" fill="#46b3d6" /><path d="M384 309L382 352L403 362Z" fill="#187eb0" /></g>,
  () => <g><L d="M434 352V346Q437 322 457 322Q480 322 482 352H471Q470 336 457 334Q445 336 444 352Z" f="#fff" /><L d="M444 328Q460 315 474 332L482 352H471Q467 335 452 336Z" f={LB} s={B} /><L d="M452 352L462 337" w={5} /></g>,
  () => <g><Q b={[40, 406, 48, 42]} /><text x="64" y="438" fontSize="29" fill={B} textAnchor="middle" textLength="42" lengthAdjust="spacingAndGlyphs">123</text></g>,
  () => <g><Q b={[119, 401, 47, 53]} w={4} /><L d="M128 410V444" w={3} /><L d="M130 415H152M130 436H158" s={B} w={6} /><L d="M130 424H146M130 444H150" s={LB} w={3} /></g>,
  () => <g><Q b={[198, 402, 47, 50]} w={4} /><L d="M210 413L218 428H202Z" f={GR} s={GR} w={2} /><L d="M232 429L240 413H224Z" f="#d6354a" s="#d6354a" w={2} /><L d="M202 442H241" s="#888" /></g>,
  () => <g><Q b={[276, 401, 48, 50]} /><Q b={[276, 401, 48, 9]} f={G} /><Q b={[284, 420, 8, 8]} /><Q b={[284, 436, 8, 8]} /><L d="M300 428H327L317 441V458H309V441Z" f="#fff" /></g>,
  () => <g><Q b={[355, 401, 48, 54]} /><Q b={[355, 401, 48, 9]} f={G} /><L d="M355 425H403M355 440H403M371 410V455M387 410V455" /></g>,
  () => <g><Q b={[434, 401, 47, 54]} /><rect x="462" y="410" width="19" height="45" fill={LB} /><rect x="434" y="440" width="47" height="15" fill={B} /><Q b={[434, 401, 47, 9]} f={G} /><L d="M434 425H481M434 440H481M449 410V455M465 410V455" /></g>,
  () => <text x="61" y="536" fontSize="50" fontWeight="700" fill="#2183b8" textAnchor="middle" textLength="29" lengthAdjust="spacingAndGlyphs">R</text>,
  () => <text x="142" y="532" fontSize="50" fontWeight="700" fill="#2183b8" textAnchor="middle" textLength="54" lengthAdjust="spacingAndGlyphs">Py</text>,
  () => <g>{axis(197, 489)}<L d="M198 500H230M198 516H218M198 532H206" /><circle cx="236" cy="500" r="6" fill={LB} stroke={B} strokeWidth="3" /><circle cx="223" cy="516" r="4" fill={G} stroke={K} strokeWidth="2" /><circle cx="211" cy="532" r="4" fill={G} stroke={K} strokeWidth="2" /></g>,
  () => <g><L d="M292 517H302M302 497V538M302 497H310M302 517H310M302 538H310" /><Q b={[275, 510, 17, 14]} f={LB} s={B} /><Q b={[309, 490, 16, 13]} f={LB} s={B} /><Q b={[309, 511, 16, 13]} f={LB} s={B} /><Q b={[309, 531, 16, 13]} f={LB} s={B} /></g>,
  () => <L d="M355 494H403V532H376L365 543V532H355Z" f="#fff" s={B} />,
  () => <g><L d="M439 504V490H463L477 504V545H439V524M463 490V504H477" f="#fff" /><Q b={[435, 508, 9, 9]} f={LB} s={B} /><L d="M450 513H470M447 522H458M462 522H472M450 532H466" s={B} /></g>,
  () => <g><L d="M50 582H78V596Q78 614 64 616Q50 614 50 596Z" f="#fff" /><L d="M50 588H40Q40 602 52 606M78 588H88Q88 602 76 606M64 616V628" /><L d="M50 582H78" s={B} w={4} /><Q b={[53, 628, 22, 7]} f={LB} s={B} /></g>,
  () => <g><L d="M122 579H148L161 592V637H122Z" f="#fff" /><L d="M148 579V592H161" /><L d="M130 632V622M138 632V616M146 632V624M154 632V612" w={4} /></g>,
  () => <g><Q b={[197, 590, 48, 43]} /><text x="226" y="621" fontSize="29" fill={B} textAnchor="middle" textLength="33" lengthAdjust="spacingAndGlyphs">23</text>{bolt(192, 576)}</g>,
  () => <g><Q b={[304, 581, 18, 20]} s="#999" /><Q b={[277, 611, 18, 20]} s="#999" /><L d="M300 610H327L317 623V640H309V623Z" f="#fff" />{bolt(271, 576)}</g>,
  () => <g><L d="M362 582H403V608L384 616L378 634H356V604Z" f={LB} s={B} /><L d="M385 582L380 600L368 608L362 634M403 590L392 594L388 608" s="#fff" w={4} /><L d="M353 578H367V598L360 608L353 598Z" f="#d0690f" s="#d0690f" /><circle cx="397" cy="629" r="7" fill="#d0690f" /></g>,
  () => <g><L d="M448 584Q457 576 466 584L478 598Q486 608 478 618L466 632Q457 640 448 632L437 618Q429 608 437 598Z" s="#a14fb0" f="#fff" /><L d="M445 588L457 600L469 588M457 600L442 613L457 627L472 613L457 600M445 630L457 618L469 630" s="#a14fb0" w={3} /></g>,
  () => <g><L d="M40 674H72L88 696L72 718H40L54 696Z" s={B} f="#fff" /><L d="M46 682H60L70 696L58 712M60 674L76 696L62 718M40 705H52" s="#2b86cf" /></g>,
  () => <g><rect x="122" y="692" width="5" height="5" fill="#444" /><rect x="139" y="692" width="5" height="5" fill="#444" /><rect x="156" y="692" width="5" height="5" fill="#444" /></g>,
];
const colX = [63, 142, 220.5, 299.5, 378.5, 457.500];

/* ---------- status bar ---------- */
const Status = styled.footer`
  height: 22px;
  flex: none;
  border-top: 1px solid #dddbd9;
  display: flex;
  align-items: center;
  justify-content: space-between;
  padding: 6px 15px 0 4px;
  color: #484644;
`;
const ZoomTools = styled.div`
  display: flex;
  align-items: center;
`;

const DoubleChev = ({ left }) => (
  <svg width="12" height="13" viewBox="0 0 12 13">
    <P d={left ? "M6 .5L.8 6.500L6 12.500M11.500 .5L6.300 6.500L11.500 12.500" : "M.8 .5L6 6.500L.8 12.500M6.300 .5L11.500 6.500L6.300 12.500"} s="#3b3a39" w={1.1} />
  </svg>
);

const tabs = [["File", 20, 35], ["Home", 36, 29], ["Insert", 32, 30], ["Modeling", 55, 30], ["View", 28, 29], ["Optimize", 53, 29], ["Help", 28, 0]];
const blue = "#1b2a9b";
const tree = [["Kategori", 42], ["Kota", 22.5], ["package_tourism", 84], ["tourism_rating", 71.5], ["tourism_with_id", 78], ["user", 21]];

export default function App() {
  return (
    <Frame>
      <Global />
      <TitleBar>
        <TitleLeft>
          <svg width="72" height="18" viewBox="15 9 72 18">
            <P d="M16 11H30V26.500H18L16 24.500ZM19.500 11V17.500H27V11M19 26V20.500H27.500V26M22 26V23" s="#eee" />
            <P d="M46 11V17.500H52M46.500 17C48 12 54 10 57 14C59 18 56 20 51 26" s="#eee" w={1.3} />
            <P d="M85 11V17.500H79M84.500 17C83 12 77 10 74.500 14C72.500 18 75 20 80 26" s="#777" w={1.3} />
          </svg>
          <TitleText>
            <Fit w={276} size={12}>Destinasi Turis Indonesia • Last saved: Today at 8:32 PM</Fit>
            <svg width="9" height="12" viewBox="0 0 9 12"><path d="M0 1H8.500L4.300 6Z" fill="#fff" /></svg>
          </TitleText>
        </TitleLeft>
        <TitleSearch>
          <svg width="16" height="18" viewBox="0 0 16 18"><ellipse cx="9.800" cy="6.500" rx="4.800" ry="5.500" fill="none" stroke="#333" strokeWidth="1.200" /><P d="M6.300 10.500L.8 17" s="#333" w={1.2} /></svg>
          <Fit w={39} size={14}>Search</Fit>
        </TitleSearch>
        <TitleRight>
          <UserName><Fit w={66} size={12}>fazdlan fairus</Fit></UserName>
          <svg width="150" height="22" viewBox="1115 7 150 22">
            <ellipse cx="1133.500" cy="18" rx="9.300" ry="10.800" fill="#fff" />
            <ellipse cx="1133.500" cy="13.500" rx="3.300" ry="3.600" fill="none" stroke="#222" strokeWidth="1.400" />
            <P d="M1128 19.500H1139Q1139 26 1133.500 26Q1128 26 1128 19.500Z" s="#222" w={1.4} />
            <P d="M1173 19H1183M1214.500 14.500H1223.500V24.500H1214.500ZM1255 14L1265 24.500M1265 14L1255 24.500" s="#fff" />
          </svg>
        </TitleRight>
      </TitleBar>

      <Ribbon>
        <TabsRow>
          {tabs.map(([t, w, gap]) => (
            <Tab key={t} $on={t === "Home"} $gap={gap}><Fit w={w} size={14} weight={t === "Home" ? 700 : 400}>{t}</Fit></Tab>
          ))}
          <ShareButton>
            <svg width="16" height="16" viewBox="0 0 16 16"><P d="M4 4H1V15H12.500V11M4.500 10.500Q5 5.500 9.500 5.500V2L15 7L9.500 12V8.500Q6.500 8 4.500 10.500Z" s="#fff" /></svg>
            <Fit w={29} size={12} weight={500}>Share</Fit>
            <svg width="9" height="7" viewBox="0 0 9 7"><P d="M.5 1L4.500 6L8.500 1" s="#fff" /></svg>
          </ShareButton>
        </TabsRow>
        <Groups>
          <Group $w={151}>
            <GroupTools $start={8}>
              <RibbonTool i="paste" cx={27} w={36} a={["Paste", 27]} off />
              <ClipList>
                <ClipRow>
                  <svg width="16" height="18" viewBox="49 80 16 18"><P d="M52 80L59 92M60 80L53 92" s="#aaa" /><ellipse cx="53.500" cy="94" rx="2" ry="2.500" fill="none" stroke="#9ccbee" strokeWidth="1.200" /><ellipse cx="58.500" cy="94" rx="2" ry="2.500" fill="none" stroke="#9ccbee" strokeWidth="1.200" /></svg>
                  <Fit w={18} size={12}>Cut</Fit>
                </ClipRow>
                <ClipRow>
                  <svg width="16" height="18" viewBox="49 105 16 18"><P d="M53 119H49.500V106H58V109M54.500 109.500H60L63.500 113V122H54.500ZM60 109.500V113H63.500M57 116H61.500M57 119H61.500" s="#aaa" /></svg>
                  <Fit w={26} size={12}>Copy</Fit>
                </ClipRow>
                <ClipRow>
                  <svg width="16" height="18" viewBox="49 131 16 18"><P d="M49.500 139L56 136L61 142L56 146.500Z" s="#e8c08f" f="#fbeedd" /><P d="M56 135.500L58.500 133L60.500 135L62.500 131.500L64 133L62 136.500L63.500 138.500L61.500 141Z" s="#aaa" f="#eee" /></svg>
                  <Fit w={74} size={12}>Format painter</Fit>
                </ClipRow>
              </ClipList>
            </GroupTools>
            <GroupName><Fit w={41} size={9.5}>Clipboard</Fit></GroupName>
          </Group>
          {ribbonGroups.map((g) => (
            <Group key={g.name} $w={g.w}>
              <GroupTools $start={g.start}>{g.tools.map((t) => <RibbonTool key={t.i} {...t} />)}</GroupTools>
              <GroupName><Fit w={g.nw} size={9.5}>{g.name}</Fit></GroupName>
            </Group>
          ))}
          <Collapse><svg width="9" height="8" viewBox="0 0 9 8"><P d="M1 6.500L4.500 2L8 6.500" s="#333" w={1.6} /></svg></Collapse>
        </Groups>
      </Ribbon>

      <Body>
        <Rail>
          <RailItem $on $h={42}><svg width="15" height="17" viewBox="0 0 15 17"><P d="M1 0V15.500H14M3.500 4H6V13H3.500ZM7.500 8H9.500V13H7.500ZM11 2H13V13H11Z" s="#222" w={1.2} /></svg></RailItem>
          <RailItem $h={43}><svg width="16" height="17" viewBox="0 0 16 17"><P d="M.8 1H15V16H.8Z" s="#777" /><P d="M.8 2.500H15" s="#999" w={2.500} /><P d="M.8 5.500H15M.8 10.500H15M5.500 4V16M10.300 4V16" s="#777" /></svg></RailItem>
          <RailItem $h={44} $pl={8}><svg width="18" height="20" viewBox="0 0 18 20"><P d="M.8 7H6.500V14H.8ZM.8 9H6.500M10.500 .8H17V8H10.500ZM10.500 3H17M10.500 12H17V19H10.500ZM10.500 14H17M4 7V3H10.500M4 14V17H10.500" s="#777" /></svg></RailItem>
          <RailItem $h={43} $pl={7}>
            <svg width="17" height="19" viewBox="0 0 17 19"><P d="M4.500 11V1H10L14 5.500V16M10 1V5.500H14M12 17H15.500V7" s="#777" /><text x="0" y="17.500" fontSize="7" fontWeight="600" fill="#555" textLength="13" lengthAdjust="spacingAndGlyphs">DAX</text></svg>
          </RailItem>
        </Rail>
        <Work>
          <WorkTop>
            <Canvas>
              <Page>
                <Banner>
                  <Logo $w={59} $h={68} $m="2px 0 0 8px">
                    <svg width="25" height="36" viewBox="241 94 74 108">
                      <polygon points="287,96 313,96 255,162 241,147" fill="#54c5f8" />
                      <polygon points="287,143 313,143 287,170 262,170" fill="#54c5f8" />
                      <polygon points="261,170 275,157 288,171 274,185" fill="#29b6f6" />
                      <polygon points="274,185 288,171 313,198 287,198" fill="#01579b" />
                    </svg>
                  </Logo>
                  <BannerTitle><Fit w={586} size={30} weight={700}>DASHBOARD DESTINASI WISATA 5 KOTA BESAR</Fit></BannerTitle>
                  <Logo $w={77} $h={66} $m="5px 0 0 53px">
                    <KaggleMark>
                      <Fit w={42} size={18} color="#3bb6e3">kaggle</Fit>
                      <Spark><svg width="13" height="8" viewBox="0 0 13 8"><P d="M1 6Q2 0 4 3T6 7M7 4Q9 0 12 2T9 7" s="#d9a08c" w={1} /></svg></Spark>
                    </KaggleMark>
                  </Logo>
                </Banner>
                <Report>
                  <LeftCol>
                    <Card solid c="#fff" title={[["Total Destinasi Wisata", 95]]} value="437" vw={52} size={34} />
                    <Card mt={1} title={[["Wisata Bahari", 60]]} value="47" vw={32} />
                    <Card mt={3} title={[["Wisata Budaya", 63]]} value="117" vw={47} />
                    <Card mt={1} h={81} title={[["Wisata Cagar Alam", 81]]} value="106" vw={47} />
                    <Card mt={1} title={[["Wisata Pusat", 56], ["Perbelanjaan", 56]]} value="15" vw={31} />
                    <Card mt={2} title={[["Wisata Tempat Ibadah", 96]]} />
                  </LeftCol>
                  <MainCol>
                    <Upper>
                      <Middle>
                        <CardsRow>
                          <Card h={79} c={blue} title={[["Wisata di Jakarta", 73]]} value="84" vw={32} />
                          <Card h={78} c={blue} title={[["Wisata di Bandung", 81]]} value="124" vw={47} />
                          <Card h={78} c={blue} title={[["Wisata di Surabaya", 81]]} value="46" vw={32} />
                          <Card h={79} mt={-1} c={blue} title={[["Wisata di Semarang", 85]]} value="57" vw={32} />
                          <Card h={79} c={blue} title={[["Wisata di Yogyakarta", 90]]} value="126" vw={47} />
                        </CardsRow>
                        <PanelsRow><DataTable /><AreaChart /></PanelsRow>
                      </Middle>
                      <FilterCol>
                        <FilterPanel h={162} field="Kota" fw={15} items={[["Select all", 32], ["Jakarta", 25.5], ["Bandung", 33], ["Semarang", 37], ["Yogyakarta", 40], ["Surabaya", 33]]} />
                        <FilterPanel h={156} field="Kategori" fw={28} items={[["Select all", 32], ["Bahari", 23], ["Budaya", 26.5], ["Cagar Alam", 42], ["Pusat Perbelanjaan", 69], ["Taman Hiburan", 55], ["Tempat Ibadah", 54]]} />
                      </FilterCol>
                    </Upper>
                    <LowerRow><BarChart /><MapPanel /></LowerRow>
                  </MainCol>
                </Report>
              </Page>
            </Canvas>
            <Scroll><Thumb /></Scroll>
            <FiltersPane>
              <DoubleChev left />
              <svg width="14" height="14" viewBox="0 0 14 14"><P d="M12.500 1.500V12.500L7 8.500H1.500V5.500H7Z" s="#333" w={1.2} /></svg>
              <VerticalLabel>Filters</VerticalLabel>
            </FiltersPane>
          </WorkTop>
          <PageTabs>
            <TabsLead>
              <ViewButton><svg width="20" height="16" viewBox="0 0 20 16"><P d="M1.200 1H18V11.500H1.200ZM9.500 11.500V14.500M6 14.500H13" s="#555" w={1.2} /></svg></ViewButton>
              <svg width="60" height="36" viewBox="70 708 60 36">
                <P d="M95.500 713.500H105.500V734.500H95.500Z" s="#777" w={1.6} /><rect x="99.500" y="730.500" width="2" height="2" fill="#555" />
                <path d="M131 723V732L127 727.500ZM147 723V732L151 727.500Z" fill="#c8c6c4" />
              </svg>
            </TabsLead>
            <PageTab><Fit w={33} size={12.5}>Page 1</Fit></PageTab>
            <AddTab><svg width="12" height="12" viewBox="0 0 12 12"><P d="M.8 6H11.200M6 .5V11.500" s="#fff" w={2.8} /></svg></AddTab>
          </PageTabs>
        </Work>
        <Pane $w={169}>
          <PaneHead><Fit w={92} size={16} weight={600}>Visualizations</Fit><DoubleChev /></PaneHead>
          <BuildLabel><Fit w={58} size={12} weight={600}>Build visual</Fit></BuildLabel>
          <BuildModes>
            <ModeButton $on>
              <svg width="24" height="28" viewBox="0 0 24 28"><P d="M1 2.500H18" s="#444" /><rect x="1" y="7" width="22" height="8.500" fill={TEAL} stroke="#222" strokeDasharray="1.500 1.500" /><rect x="1" y="18.500" width="22" height="8" fill={TEAL} stroke="#222" strokeDasharray="1.500 1.500" /></svg>
            </ModeButton>
            <ModeButton>
              <svg width="24" height="27" viewBox="0 0 24 27"><P d="M6 25.500H1.500V1H11.500L17 8V10M11.500 1V8H17" s="#333" w={1.2} /><P d="M22.500 9L12 20L15 22.500L23.500 10ZM12 20Q8 20 9 24L6.500 26Q13 27 15 22.500" s="#333" /></svg>
            </ModeButton>
          </BuildModes>
          <svg width="168" height="10" viewBox="943 271.5 168 10"><P d="M943 280.500H957L965 272.500L973 280.500H1111" s="#8a8886" w={1} /></svg>
          <VisualGrid>
            {visuals.map((V, n) => {
              const cx = colX[n % 6], cy = 68 + Math.floor(n / 6) * 90;
              return <svg key={n} width="20" height="22" viewBox={`${cx - 30} ${cy - 33} 60 66`}><V /></svg>;
            })}
          </VisualGrid>
          <Field $h={33} $pt={4}><Fit w={32} size={12}>Values</Fit></Field>
          <Drop $h={30} $pl={9}><Fit w={101} size={12}>Add data fields here</Fit></Drop>
          <Field $h={35} $pt={6}><Fit w={66} size={12} weight={500}>Drill through</Fit></Field>
          <Field $h={25}><Fit w={63} size={12}>Cross-report</Fit><Toggle><Knob /><Fit w={13} size={10}>Off</Fit></Toggle></Field>
          <Field $h={33}><Fit w={70} size={12}>Keep all filters</Fit><Toggle $on><Knob /><Fit w={12} size={10}>On</Fit></Toggle></Field>
          <Gap />
          <Drop $h={28} $pl={7}><Fit w={142} size={12}>Add drill-through fields here</Fit></Drop>
        </Pane>
        <Pane $w={169}>
          <PaneHead $pl={8}><Fit w={32} size={16} weight={600}>Data</Fit><DoubleChev /></PaneHead>
          <SearchBox>
            <svg width="14" height="15" viewBox="0 0 14 15"><ellipse cx="6" cy="6" rx="5" ry="5.300" fill="none" stroke="#666" strokeWidth="1.100" /><P d="M9.500 10L13.500 14.500" s="#666" /></svg>
            <Fit w={39} size={14} color="#707070">Search</Fit>
          </SearchBox>
          {tree.map(([t, w]) => (
            <TreeItem key={t}>
              <svg width="7" height="13" viewBox="0 0 7 13"><P d="M1 .8L6.300 6.500L1 12.200" s="#666" /></svg>
              <TreeGap $w={6} />
              <svg width="12" height="14" viewBox="0 0 12 14"><rect x=".8" y=".8" width="10.400" height="12.400" rx="2.500" fill="none" stroke="#333" strokeWidth="1.300" /><P d="M1 4.800H11M1 9.200H11M4.300 1V13M7.800 1V13" s="#333" w={1} /></svg>
              <TreeGap $w={5} />
              <Fit w={w} size={12.500}>{t}</Fit>
            </TreeItem>
          ))}
        </Pane>
      </Body>

      <Status>
        <Fit w={56} size={12.500}>Page 1 of 1</Fit>
        <ZoomTools>
          <svg width="117" height="14" viewBox="1082 752.5 117 14">
            <P d="M1082.500 759.500H1087M1191 759.500H1197M1194 756V763" s="#444" w={1.6} />
            <P d="M1091 759.500H1184" s="#777" /><P d="M1138.500 757V763" s="#777" /><rect x="1112.500" y="753.500" width="3.500" height="12" fill="#555" />
          </svg>
          <TreeGap $w={11} />
          <Fit w={22} size={12} color="#605e5c">55%</Fit>
          <TreeGap $w={17} />
          <svg width="16" height="13" viewBox="0 0 16 13"><P d="M.6 .6H15V12.400H.6Z" s="#666" /><P d="M3.500 5V3H6M9.500 3H12V5M12 8V10H9.500M6 10H3.500V8" s="#555" w={1.3} /></svg>
        </ZoomTools>
      </Status>
    </Frame>
  );
}
